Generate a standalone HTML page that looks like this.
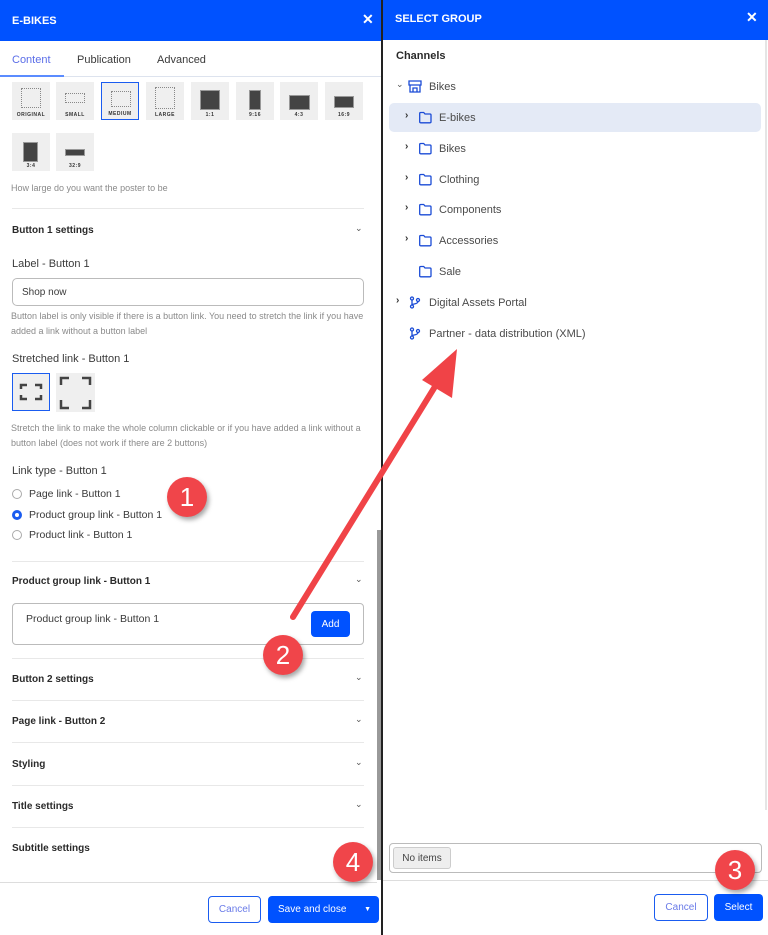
<!DOCTYPE html>
<html><head><meta charset="utf-8"><style>
*{margin:0;padding:0;box-sizing:border-box}
body{width:768px;height:935px;overflow:hidden;background:#fff;font-family:"Liberation Sans",sans-serif;position:relative;color:#333}
.a{position:absolute}
.hdr{background:#0052ff;color:#fff;font-weight:bold;font-size:11px}
.t{font-size:11px;color:#3a3a3a;white-space:nowrap}
.s{font-size:9px;color:#8a8a8a;line-height:15px}
.b{font-size:10px;font-weight:bold;color:#2a2a2a}
.hr{height:1px;background:#e8e8e8}
.chev{font-size:9px;color:#555}
.tile{background:#efefef;width:38px;height:38px}
.tile span{position:absolute;bottom:2px;left:0;right:0;text-align:center;font-size:5px;font-weight:bold;letter-spacing:.5px;color:#333}
.dot{position:absolute;border:1px dotted #888}
.blk{position:absolute;background:#444;border:1px solid #999}
.badge{position:absolute;width:40px;height:40px;border-radius:50%;background:#f0454a;color:#fff;font-size:26px;text-align:center;line-height:40px;box-shadow:2px 3px 5px rgba(0,0,0,.35)}
.tr{position:absolute;font-size:11px;color:#4a4a4a}
.ch{position:absolute;font-size:10px;font-weight:bold;color:#333}
.btn{position:absolute;border-radius:4px;font-size:10px;display:flex;align-items:center;justify-content:center}
</style></head><body>
<div class="a hdr" style="left:0;top:0;width:381px;height:41px"><div class="a" style="left:12px;top:15px">E-BIKES</div><div class="a" style="left:362px;top:11px;font-size:14px">✕</div></div>
<div class="a" style="left:0;top:41px;width:381px;height:36px;border-bottom:1px solid #dde3ee"></div>
<div class="a t" style="left:12px;top:54px;color:#5b6ee8">Content</div>
<div class="a" style="left:0;top:75px;width:64px;height:2px;background:#5b8cff"></div>
<div class="a t" style="left:77px;top:54px">Publication</div>
<div class="a t" style="left:157px;top:54px">Advanced</div>
<div class="a tile" style="left:12px;top:82px"><div class="dot" style="left:9px;top:6px;width:20px;height:20px"></div><span>ORIGINAL</span></div>
<div class="a tile" style="left:56px;top:82px"><div class="dot" style="left:9px;top:11px;width:20px;height:10px"></div><span>SMALL</span></div>
<div class="a tile" style="left:101px;top:82px;border:1px solid #1a5cf0"><div class="dot" style="left:9px;top:8px;width:20px;height:16px"></div><span>MEDIUM</span></div>
<div class="a tile" style="left:146px;top:82px"><div class="dot" style="left:9px;top:5px;width:20px;height:22px"></div><span>LARGE</span></div>
<div class="a tile" style="left:191px;top:82px"><div class="blk" style="left:9px;top:8px;width:20px;height:20px"></div><span>1:1</span></div>
<div class="a tile" style="left:236px;top:82px"><div class="blk" style="left:13px;top:8px;width:12px;height:20px"></div><span>9:16</span></div>
<div class="a tile" style="left:280px;top:82px"><div class="blk" style="left:9px;top:13px;width:21px;height:15px"></div><span>4:3</span></div>
<div class="a tile" style="left:325px;top:82px"><div class="blk" style="left:9px;top:14px;width:20px;height:12px"></div><span>16:9</span></div>
<div class="a tile" style="left:12px;top:133px"><div class="blk" style="left:11px;top:9px;width:15px;height:20px"></div><span>3:4</span></div>
<div class="a tile" style="left:56px;top:133px"><div class="blk" style="left:9px;top:16px;width:20px;height:7px"></div><span>32:9</span></div>
<div class="a s" style="left:11px;top:181px">How large do you want the poster to be</div>
<div class="a hr" style="left:12px;top:208px;width:352px"></div>
<div class="a b" style="left:12px;top:225px">Button 1 settings</div><div class="a chev" style="left:355px;top:223px">⌄</div>
<div class="a t" style="left:12px;top:258px">Label - Button 1</div>
<div class="a" style="left:12px;top:278px;width:352px;height:28px;border:1px solid #bbb;border-radius:5px"></div>
<div class="a t" style="left:22px;top:287px;font-size:10px">Shop now</div>
<div class="a s" style="left:11px;top:309px;width:360px">Button label is only visible if there is a button link. You need to stretch the link if you have added a link without a button label</div>
<div class="a t" style="left:12px;top:353px">Stretched link - Button 1</div>
<div class="a" style="left:12px;top:373px;width:38px;height:38px;background:#efefef;border:1px solid #1a5cf0"></div>
<svg class="a" style="left:12px;top:373px" width="90" height="40"><g fill="none" stroke="#444" stroke-width="2.5"><path d="M9 16v-4h6M23 12h6v4M9 22v4h6M23 26h6v-4"/></g></svg>
<div class="a" style="left:56px;top:373px;width:39px;height:39px;background:#efefef"></div>
<svg class="a" style="left:56px;top:373px" width="40" height="40"><g fill="none" stroke="#444" stroke-width="2.5"><path d="M5 12V5h8M26 5h8v7M5 27v8h8M26 35h8v-8"/></g></svg>
<div class="a s" style="left:11px;top:421px;width:360px">Stretch the link to make the whole column clickable or if you have added a link without a button label (does not work if there are 2 buttons)</div>
<div class="a t" style="left:12px;top:465px">Link type - Button 1</div>
<div class="a" style="left:12px;top:489px;width:10px;height:10px;border:1px solid #aaa;border-radius:50%"></div><div class="a t" style="left:29px;top:488px;font-size:10.5px">Page link - Button 1</div>
<div class="a" style="left:12px;top:510px;width:10px;height:10px;border:3px solid #1a5cf0;border-radius:50%"></div><div class="a t" style="left:29px;top:509px;font-size:10.5px">Product group link - Button 1</div>
<div class="a" style="left:12px;top:530px;width:10px;height:10px;border:1px solid #aaa;border-radius:50%"></div><div class="a t" style="left:29px;top:529px;font-size:10.5px">Product link - Button 1</div>
<div class="a hr" style="left:12px;top:561px;width:352px"></div>
<div class="a b" style="left:12px;top:576px">Product group link - Button 1</div><div class="a chev" style="left:355px;top:574px">⌄</div>
<div class="a" style="left:12px;top:603px;width:352px;height:42px;border:1px solid #bbb;border-radius:4px"></div>
<div class="a t" style="left:26px;top:613px;font-size:10.5px">Product group link - Button 1</div>
<div class="btn" style="left:311px;top:611px;width:39px;height:26px;background:#0052ff;color:#fff">Add</div>
<div class="a hr" style="left:12px;top:658px;width:352px"></div>
<div class="a b" style="left:12px;top:674px">Button 2 settings</div><div class="a chev" style="left:355px;top:672px">⌄</div>
<div class="a hr" style="left:12px;top:700px;width:352px"></div>
<div class="a b" style="left:12px;top:716px">Page link - Button 2</div><div class="a chev" style="left:355px;top:714px">⌄</div>
<div class="a hr" style="left:12px;top:742px;width:352px"></div>
<div class="a b" style="left:12px;top:759px">Styling</div><div class="a chev" style="left:355px;top:757px">⌄</div>
<div class="a hr" style="left:12px;top:785px;width:352px"></div>
<div class="a b" style="left:12px;top:801px">Title settings</div><div class="a chev" style="left:355px;top:799px">⌄</div>
<div class="a hr" style="left:12px;top:827px;width:352px"></div>
<div class="a b" style="left:12px;top:843px">Subtitle settings</div>
<div class="a" style="left:377px;top:530px;width:4px;height:350px;background:#999"></div>
<div class="a hr" style="left:0;top:882px;width:377px;background:#ddd"></div>
<div class="btn" style="left:208px;top:896px;width:53px;height:27px;border:1px solid #1a5cf0;color:#6a7be8">Cancel</div>
<div class="btn" style="left:268px;top:896px;width:111px;height:27px;background:#0052ff;color:#fff;justify-content:flex-start;padding-left:10px">Save and close<span style="position:absolute;right:8px;font-size:7px">▼</span></div>
<div class="a" style="left:381px;top:0;width:2px;height:935px;background:#222"></div>
<div class="a hdr" style="left:383px;top:0;width:385px;height:40px"><div class="a" style="left:12px;top:13px">SELECT GROUP</div><div class="a" style="left:363px;top:9px;font-size:14px">✕</div></div>
<div class="a b" style="left:396px;top:50px;font-size:11px">Channels</div>
<div class="a chev" style="left:396px;top:79px">⌄</div>
<svg class="a" style="left:408px;top:80px" width="14" height="13"><g fill="none" stroke="#1a4bd6" stroke-width="1.3"><path d="M1 1h12v4H1zM2 5v7h10V5M5 12V8h4v4"/></g></svg>
<div class="tr" style="left:429px;top:81px">Bikes</div>
<div class="a" style="left:389px;top:103px;width:372px;height:29px;background:#e4eaf6;border-radius:5px"></div>
<svg class="a" style="left:0;top:0" width="768" height="300"><defs><path id="f" d="M0.7 1.5a1 1 0 0 1 1-1h3l1.3 1.5h5a1 1 0 0 1 1 1v6.8a1 1 0 0 1-1 1H1.7a1 1 0 0 1-1-1z" fill="none" stroke="#1a4bd6" stroke-width="1.3"/></defs>
<use href="#f" x="419" y="112"/><use href="#f" x="419" y="143"/><use href="#f" x="419" y="174"/><use href="#f" x="419" y="204"/><use href="#f" x="419" y="235"/><use href="#f" x="419" y="266"/></svg>
<div class="ch" style="left:405px;top:110px">›</div><div class="tr" style="left:439px;top:112px">E-bikes</div>
<div class="ch" style="left:405px;top:141px">›</div><div class="tr" style="left:439px;top:143px">Bikes</div>
<div class="ch" style="left:405px;top:172px">›</div><div class="tr" style="left:439px;top:174px">Clothing</div>
<div class="ch" style="left:405px;top:202px">›</div><div class="tr" style="left:439px;top:204px">Components</div>
<div class="ch" style="left:405px;top:233px">›</div><div class="tr" style="left:439px;top:235px">Accessories</div>
<div class="tr" style="left:439px;top:266px">Sale</div>
<div class="ch" style="left:396px;top:295px">›</div>
<svg class="a" style="left:409px;top:296px" width="12" height="13"><g fill="none" stroke="#1a4bd6" stroke-width="1.3"><circle cx="3" cy="2.5" r="1.5"/><circle cx="3" cy="10.5" r="1.5"/><circle cx="9" cy="4" r="1.5"/><path d="M3 4v5M9 5.5c0 3-6 2-6 3.5"/></g></svg>
<div class="tr" style="left:429px;top:297px">Digital Assets Portal</div>
<svg class="a" style="left:409px;top:327px" width="12" height="13"><g fill="none" stroke="#1a4bd6" stroke-width="1.3"><circle cx="3" cy="2.5" r="1.5"/><circle cx="3" cy="10.5" r="1.5"/><circle cx="9" cy="4" r="1.5"/><path d="M3 4v5M9 5.5c0 3-6 2-6 3.5"/></g></svg>
<div class="tr" style="left:429px;top:328px">Partner - data distribution (XML)</div>
<div class="a" style="left:765px;top:40px;width:2px;height:770px;background:#e5e5e5"></div>
<div class="a" style="left:389px;top:843px;width:373px;height:30px;border:1px solid #bbb;border-radius:4px"></div>
<div class="btn" style="left:393px;top:847px;width:58px;height:22px;background:#eee;border:1px solid #ccc;border-radius:3px;color:#444">No items</div>
<div class="a hr" style="left:383px;top:880px;width:385px;background:#ddd"></div>
<div class="btn" style="left:654px;top:894px;width:54px;height:27px;border:1px solid #1a5cf0;color:#6a7be8">Cancel</div>
<div class="btn" style="left:714px;top:894px;width:49px;height:27px;background:#0052ff;color:#fff">Select</div>
<svg class="a" style="left:0;top:0" width="768" height="935"><path d="M293 617L444 372" stroke="#f04347" stroke-width="6" stroke-linecap="round" fill="none"/><path d="M457 349L452 398L422 380Z" fill="#f04347"/></svg>
<div class="badge" style="left:167px;top:477px">1</div>
<div class="badge" style="left:263px;top:635px">2</div>
<div class="badge" style="left:715px;top:850px">3</div>
<div class="badge" style="left:333px;top:842px">4</div>
</body></html>
